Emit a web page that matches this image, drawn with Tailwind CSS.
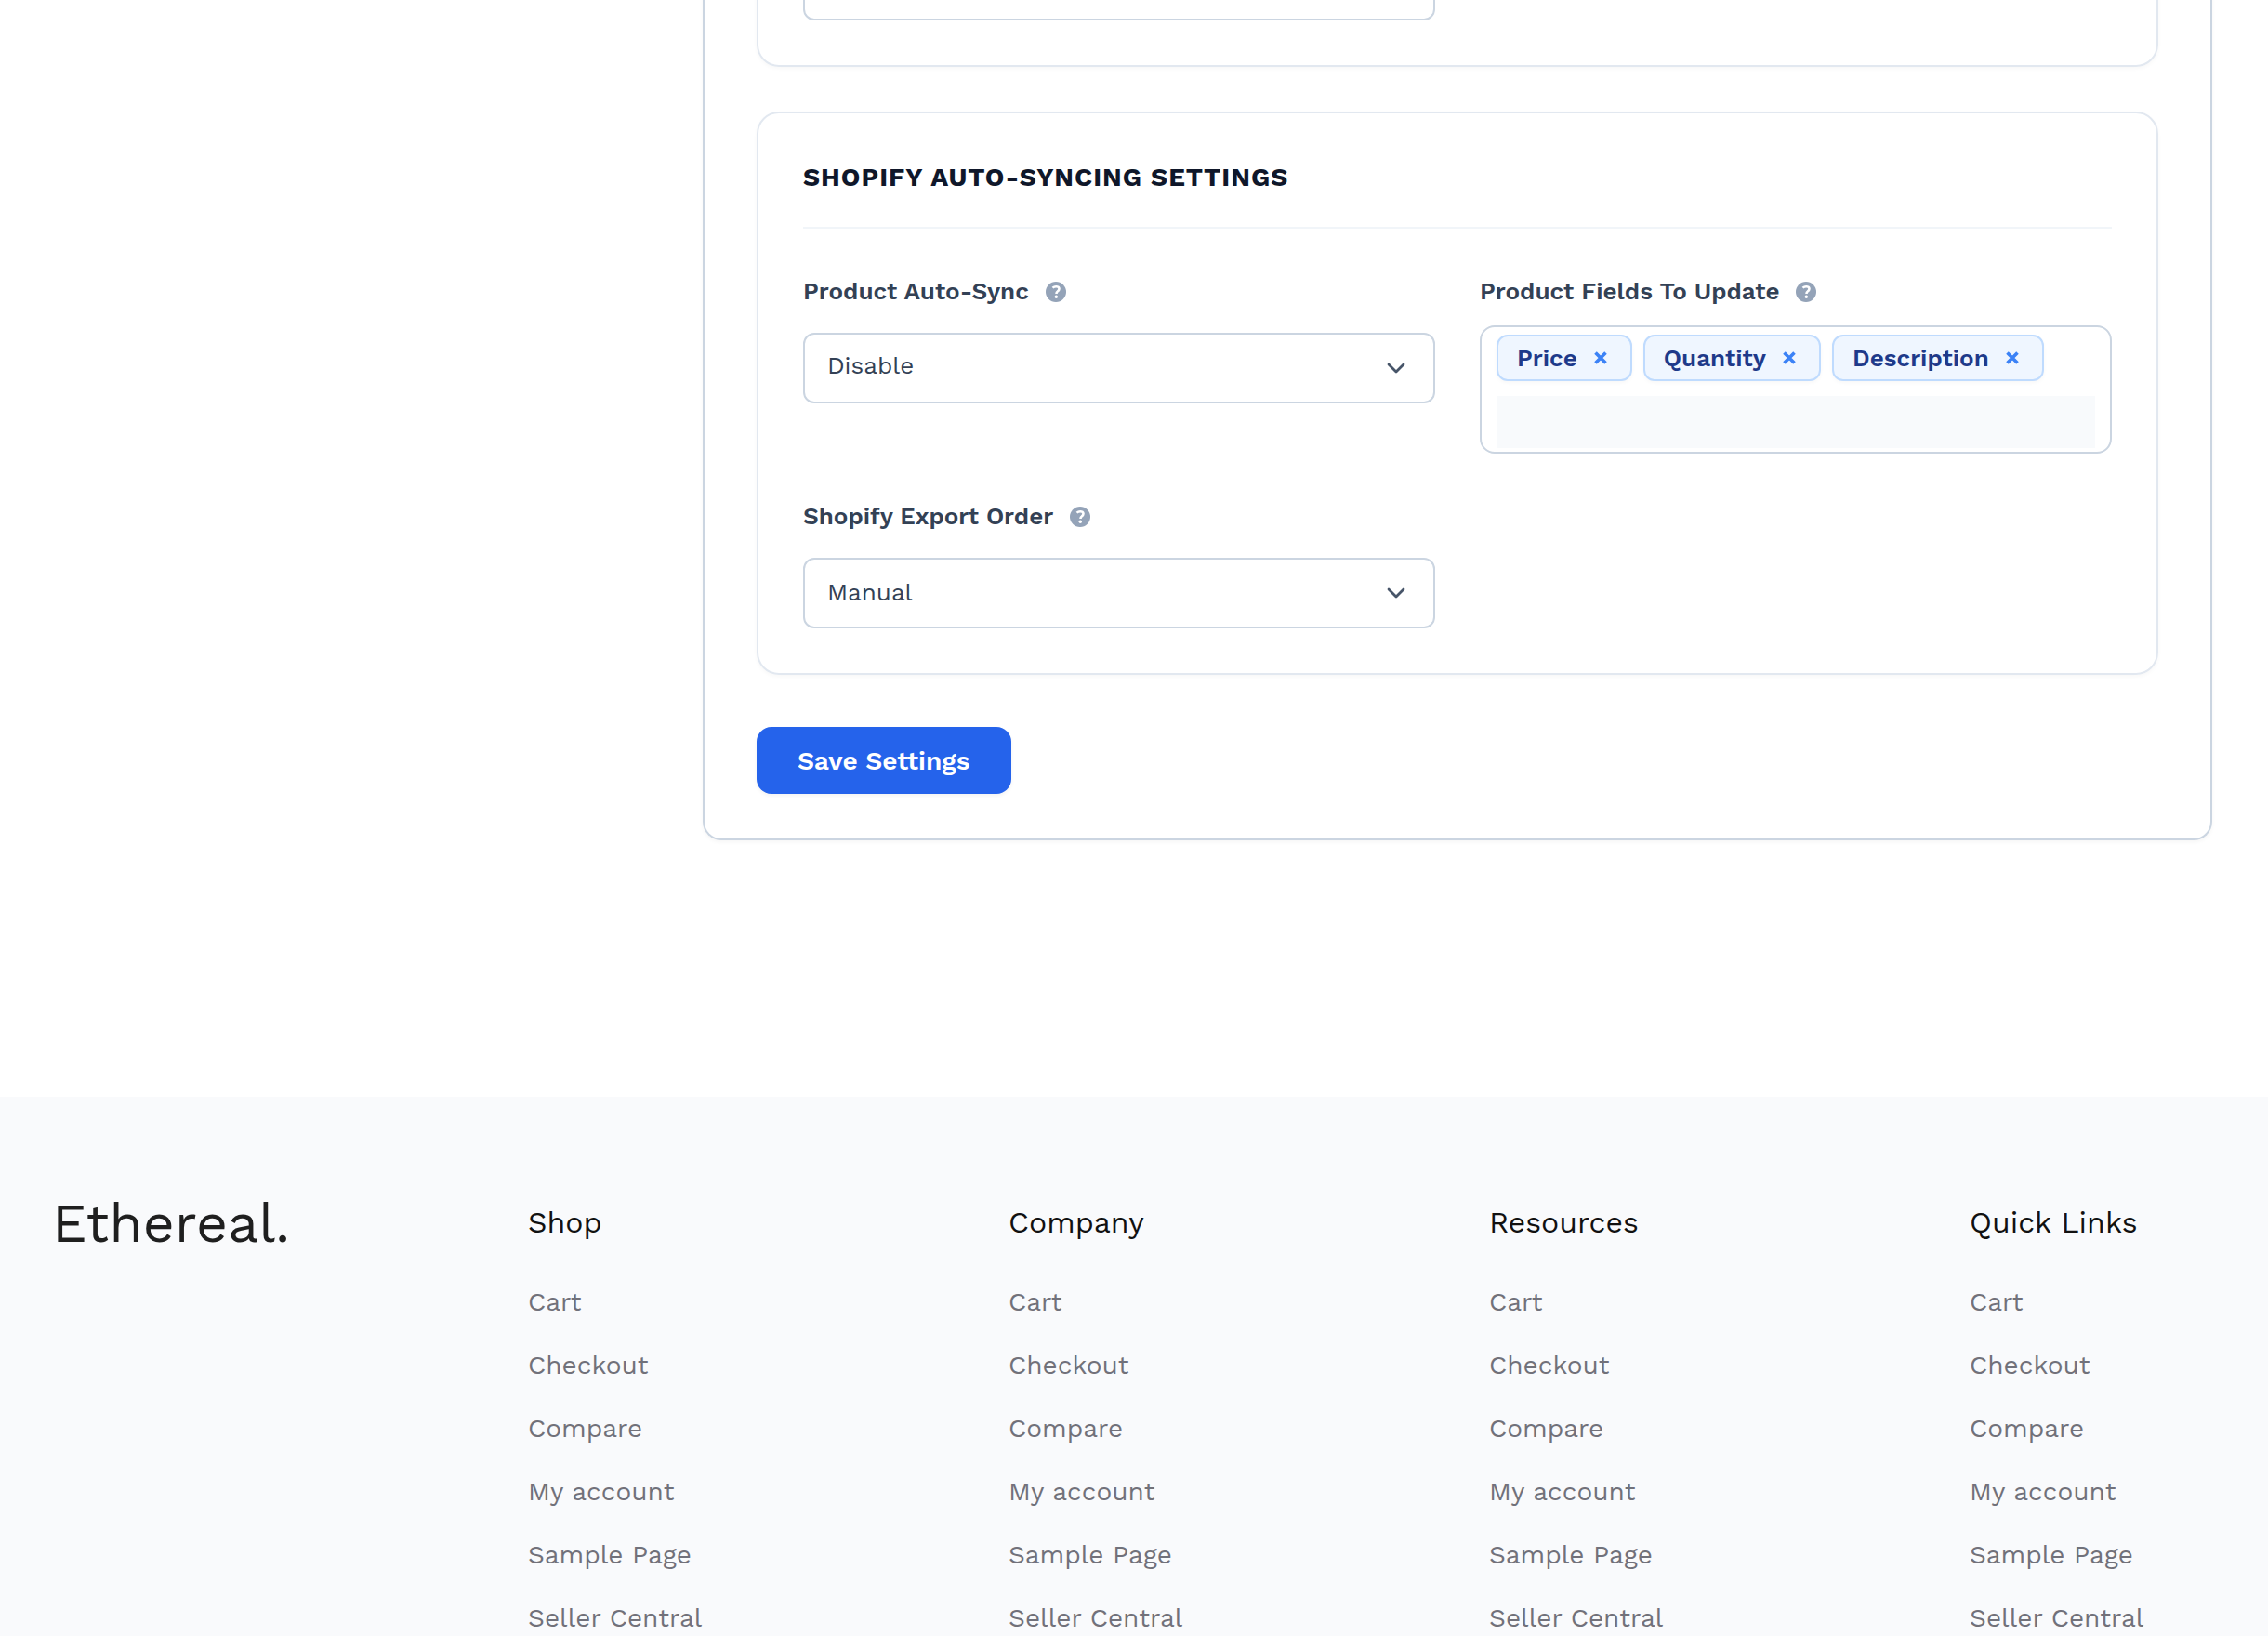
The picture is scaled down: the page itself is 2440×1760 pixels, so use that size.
<!DOCTYPE html>
<html lang="en">
<head>
<meta charset="utf-8">
<meta name="viewport" content="width=device-width, initial-scale=1">
<title>Settings - Ethereal</title>
<script src="https://cdn.jsdelivr.net/npm/@tailwindcss/browser@4"></script>
</head>
<body class="h-screen overflow-hidden bg-white font-['Work_Sans',Inter,sans-serif] text-[26px] text-[#334155]">

<svg class="hidden">
  <symbol id="help" viewBox="0 0 22 22">
    <circle cx="11" cy="11" r="11" fill="#94a3b8"/>
    <path d="M7.500 6.600C8.500 5.700 9.700 5.200 11.200 5.200c2 0 3.300.9 3.300 2.600 0 1.400-.8 2-1.800 2.700-.9.600-1.200 1-1.200 2.400" fill="none" stroke="#fff" stroke-width="2.600"/>
    <circle cx="11.300" cy="16.300" r="1.700" fill="#fff"/>
  </symbol>
  <symbol id="chevron" viewBox="0 0 20 12">
    <path d="M2 2l8 8 8-8" fill="none" stroke="#475569" stroke-width="2.800" stroke-linecap="round" stroke-linejoin="round"/>
  </symbol>
  <symbol id="cross" viewBox="0 0 14 14">
    <path d="M1.500 1.500l11 11M12.500 1.500l-11 11" fill="none" stroke="#3b82f6" stroke-width="3.600"/>
  </symbol>
</svg>

<main class="-mt-[54px] grid grid-cols-[3fr_7fr] px-[60px] pb-[276px]">
  <aside></aside>
  <form class="rounded-b-[20px] border-2 border-t-0 border-[#cbd5e1] px-14 pb-12 shadow-[0_2px_4px_rgb(0_0_0/0.04)]">

    <section class="grid grid-cols-2 gap-12 rounded-b-3xl border-2 border-t-0 border-[#e2e8f0] px-12 pb-12 shadow-[0_2px_4px_rgb(0_0_0/0.03)]">
      <select aria-label="Setting" class="h-[76px] appearance-none rounded-xl border-2 border-[#cbd5e1] bg-white px-6"><option></option></select>
    </section>

    <section class="mt-12 rounded-3xl border-2 border-[#e2e8f0] p-12 shadow-[0_2px_4px_rgb(0_0_0/0.03)]">
      <h2 class="border-b-2 border-[#f1f5f9] pb-8 text-[28px] leading-[42px] font-bold tracking-[1px] text-[#0f172a] uppercase">Shopify Auto-Syncing Settings</h2>

      <div class="mt-12 grid grid-cols-2 gap-12">
        <div>
          <div class="mb-6 flex h-10 items-center gap-[18px]">
            <label for="auto-sync" class="pb-0.5 leading-[38px] font-semibold">Product Auto-Sync</label>
            <svg class="size-[22px]"><use href="#help"/></svg>
          </div>
          <div class="grid items-center">
            <select id="auto-sync" class="col-start-1 row-start-1 h-[76px] appearance-none rounded-xl border-2 border-[#cbd5e1] bg-white px-6 pb-1.5"><option>Disable</option><option>Enable</option></select>
            <svg class="pointer-events-none col-start-1 row-start-1 mr-8 h-3 w-5 justify-self-end"><use href="#chevron"/></svg>
          </div>
        </div>

        <div>
          <div class="mb-4 flex h-10 items-center gap-[18px]">
            <label for="fields" class="pb-0.5 leading-[38px] font-semibold">Product Fields To Update</label>
            <svg class="size-[22px]"><use href="#help"/></svg>
          </div>
          <div class="rounded-2xl border-2 border-[#cbd5e1] px-4 pt-2 pb-1">
            <div class="flex gap-3 font-semibold text-[#1e3a8a]">
              <span class="flex h-[50px] items-center gap-[18px] rounded-xl border-2 border-[#bfdbfe] bg-[#eff6ff] pr-[25px] pl-5 shadow-[0_2px_4px_rgb(0_0_0/0.03)]">Price<button type="button" aria-label="Remove Price"><svg class="size-[14px]"><use href="#cross"/></svg></button></span>
              <span class="flex h-[50px] items-center gap-[18px] rounded-xl border-2 border-[#bfdbfe] bg-[#eff6ff] pr-[25px] pl-5 shadow-[0_2px_4px_rgb(0_0_0/0.03)]">Quantity<button type="button" aria-label="Remove Quantity"><svg class="size-[14px]"><use href="#cross"/></svg></button></span>
              <span class="flex h-[50px] items-center gap-[18px] rounded-xl border-2 border-[#bfdbfe] bg-[#eff6ff] pr-[25px] pl-5 shadow-[0_2px_4px_rgb(0_0_0/0.03)]">Description<button type="button" aria-label="Remove Description"><svg class="size-[14px]"><use href="#cross"/></svg></button></span>
            </div>
            <input id="fields" type="text" class="mt-4 block h-14 w-full bg-[#f8fafc]">
          </div>
        </div>

        <div>
          <div class="mb-6 flex h-10 items-center gap-[18px]">
            <label for="export-order" class="pb-0.5 leading-[38px] font-semibold">Shopify Export Order</label>
            <svg class="size-[22px]"><use href="#help"/></svg>
          </div>
          <div class="grid items-center">
            <select id="export-order" class="col-start-1 row-start-1 h-[76px] appearance-none rounded-xl border-2 border-[#cbd5e1] bg-white px-6 pb-0.5"><option>Manual</option><option>Automatic</option></select>
            <svg class="pointer-events-none col-start-1 row-start-1 mr-8 h-3 w-5 justify-self-end"><use href="#chevron"/></svg>
          </div>
        </div>
      </div>
    </section>

    <button type="submit" class="mt-14 block h-[72px] rounded-2xl bg-[#2563eb] px-11 pt-0.5 text-[28px] font-semibold text-white shadow-[0_2px_4px_rgb(0_0_0/0.05)]">Save Settings</button>
  </form>
</main>

<footer class="grid grid-cols-[512fr_517fr_517fr_517fr_265fr] bg-[#f9fafc] px-14 pt-24 pb-24 text-[28px] text-[#71717a]">
  <a href="#" class="text-[59px] leading-[80px] text-[#1f1f1f]">Ethereal.</a>
  <nav>
    <h3 class="mb-[13px] text-[32px] leading-[78px] text-[#111111]">Shop</h3>
    <ul class="leading-[68px] whitespace-nowrap">
      <li><a href="#">Cart</a></li><li><a href="#">Checkout</a></li><li><a href="#">Compare</a></li><li><a href="#">My account</a></li><li><a href="#">Sample Page</a></li><li><a href="#">Seller Central</a></li>
    </ul>
  </nav>
  <nav>
    <h3 class="mb-[13px] text-[32px] leading-[78px] text-[#111111]">Company</h3>
    <ul class="leading-[68px] whitespace-nowrap">
      <li><a href="#">Cart</a></li><li><a href="#">Checkout</a></li><li><a href="#">Compare</a></li><li><a href="#">My account</a></li><li><a href="#">Sample Page</a></li><li><a href="#">Seller Central</a></li>
    </ul>
  </nav>
  <nav>
    <h3 class="mb-[13px] text-[32px] leading-[78px] text-[#111111]">Resources</h3>
    <ul class="leading-[68px] whitespace-nowrap">
      <li><a href="#">Cart</a></li><li><a href="#">Checkout</a></li><li><a href="#">Compare</a></li><li><a href="#">My account</a></li><li><a href="#">Sample Page</a></li><li><a href="#">Seller Central</a></li>
    </ul>
  </nav>
  <nav>
    <h3 class="mb-[13px] text-[32px] leading-[78px] text-[#111111]">Quick Links</h3>
    <ul class="leading-[68px] whitespace-nowrap">
      <li><a href="#">Cart</a></li><li><a href="#">Checkout</a></li><li><a href="#">Compare</a></li><li><a href="#">My account</a></li><li><a href="#">Sample Page</a></li><li><a href="#">Seller Central</a></li>
    </ul>
  </nav>
</footer>
</body>
</html>
